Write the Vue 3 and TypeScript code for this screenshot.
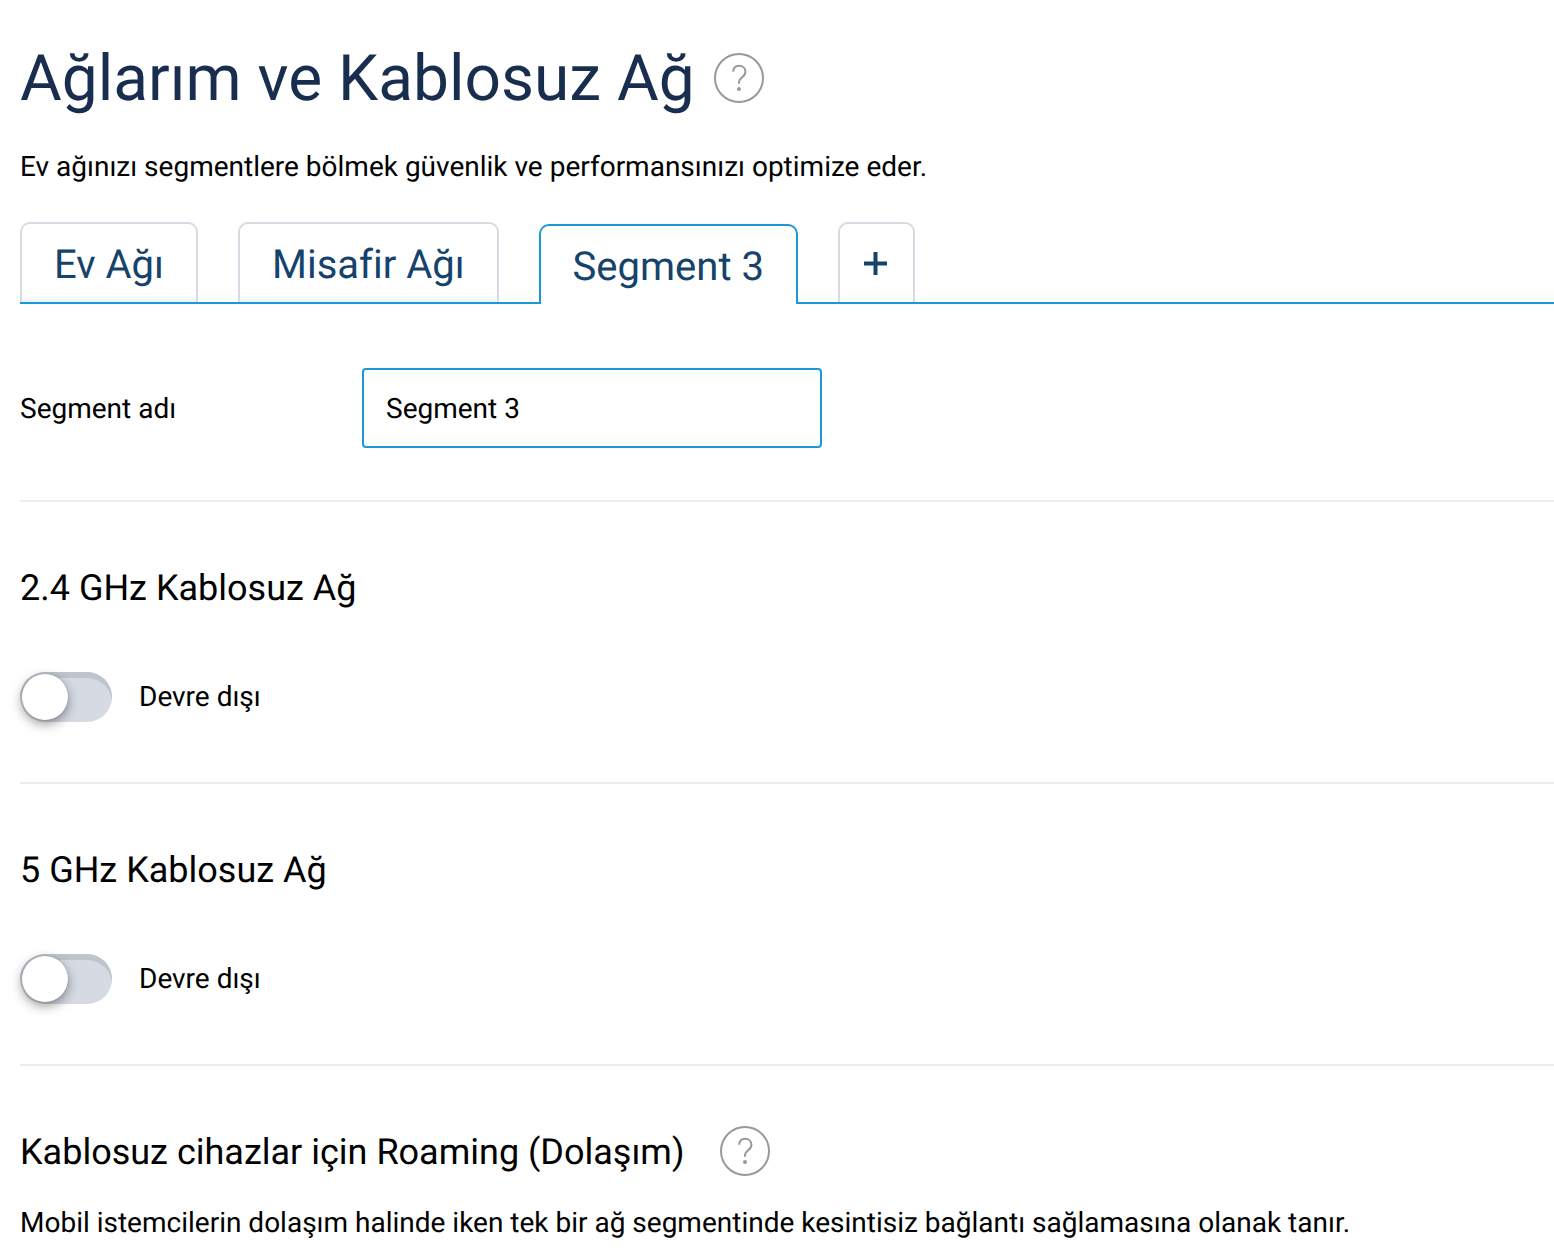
<script setup lang="ts">
import { ref } from 'vue'

const tabs = ['Ev Ağı', 'Misafir Ağı', 'Segment 3']
const active = ref('Segment 3')
const segmentName = ref('Segment 3')
const bands = ref([
  { id: 'band24', title: '2.4 GHz Kablosuz Ağ', enabled: false },
  { id: 'band5', title: '5 GHz Kablosuz Ağ', enabled: false },
])
</script>

<template>
  <main class="page">
    <header class="heading">
      <h1>Ağlarım ve Kablosuz Ağ</h1>
      <button class="help" type="button" aria-label="Yardım">
        <svg viewBox="0 0 50 50"><circle cx="25" cy="25" r="24" /><path d="M19.200 18.800c.2-3.800 2.500-6 6-6 3.600 0 6.200 2.300 6.200 5.900 0 5.900-6.400 5.300-6.400 10.300v1.800" /><circle class="dot" cx="25" cy="36" r="2" /></svg>
      </button>
    </header>
    <p class="lead">Ev ağınızı segmentlere bölmek güvenlik ve performansınızı optimize eder.</p>

    <nav class="tabs">
      <button v-for="tab in tabs" :key="tab" type="button" class="tab" :class="{ active: tab === active }" @click="active = tab">{{ tab }}</button>
      <button type="button" class="tab add" aria-label="Segment ekle">
        <svg viewBox="0 0 25 24"><path d="M11.500 0v23M0 11.500h23" /></svg>
      </button>
    </nav>

    <section class="field">
      <label for="segment-name">Segment adı</label>
      <input id="segment-name" v-model="segmentName" type="text" />
    </section>

    <section v-for="band in bands" :key="band.id" class="band">
      <h2>{{ band.title }}</h2>
      <label class="switch" :for="band.id">
        <input :id="band.id" v-model="band.enabled" type="checkbox" />
        <span>{{ band.enabled ? 'Etkin' : 'Devre dışı' }}</span>
      </label>
    </section>

    <section class="roaming">
      <div class="roaming-title">
        <h2>Kablosuz cihazlar için Roaming (Dolaşım)</h2>
        <button class="help" type="button" aria-label="Yardım">
          <svg viewBox="0 0 50 50"><circle cx="25" cy="25" r="24" /><path d="M19.200 18.800c.2-3.800 2.500-6 6-6 3.600 0 6.200 2.300 6.200 5.900 0 5.900-6.400 5.300-6.400 10.300v1.800" /><circle class="dot" cx="25" cy="36" r="2" /></svg>
        </button>
      </div>
      <p>Mobil istemcilerin dolaşım halinde iken tek bir ağ segmentinde kesintisiz bağlantı sağlamasına olanak tanır.</p>
    </section>
  </main>
</template>

<style>
body {
  margin: 0;
  background: #fff;
}
</style>

<style scoped>
.page {
  padding: 39px 0 0 20px;
  font-family: Roboto, sans-serif;
  font-size: 28px;
  font-variant-ligatures: none;
  text-rendering: geometricPrecision;
  line-height: 34px;
  color: #000;
}
h1,
h2,
p {
  margin: 0;
  font-weight: 400;
}
button {
  font-family: inherit;
  font-variant-ligatures: inherit;
  text-rendering: inherit;
  cursor: pointer;
}
.heading {
  display: flex;
  align-items: center;
  gap: 19px;
}
h1 {
  padding-top: 2px;
  font-size: 64px;
  line-height: 76px;
  color: #192d4e;
}
h2 {
  font-size: 36px;
  line-height: 44px;
}
.help {
  flex: none;
  width: 50px;
  height: 50px;
  padding: 0;
  border: 0;
  background: none;
}
.help svg {
  display: block;
  fill: none;
  stroke: #999;
  stroke-width: 2;
}
.help .dot {
  fill: #999;
  stroke: none;
}
.lead {
  margin-top: 33px;
}
.tabs {
  display: flex;
  align-items: flex-end;
  gap: 40px;
  margin-top: 38px;
  border-bottom: 2px solid #1c98d4;
}
.tab {
  box-sizing: border-box;
  height: 80px;
  padding: 4px 32px 0;
  border: 2px solid #d6dae3;
  border-bottom: 0;
  border-radius: 10px 10px 0 0;
  background: linear-gradient(#fff 92%, #e8f4fb);
  font-size: 40px;
  line-height: 46px;
  color: #15436b;
}
.tab.active {
  margin-bottom: -2px;
  border-color: #1c98d4;
  background: #fff;
}
.tab.add {
  padding: 2px 24px 0;
  background: #fff;
}
.add svg {
  display: block;
  width: 25px;
  height: 24px;
  fill: none;
  stroke: #15436b;
  stroke-width: 4;
}
.field {
  display: flex;
  align-items: center;
  padding: 64px 0 52px;
}
.field label {
  width: 342px;
  padding-top: 2px;
}
.field input {
  box-sizing: border-box;
  width: 460px;
  height: 80px;
  padding: 0 22px;
  border: 2px solid #1c98d4;
  border-radius: 4px;
  outline: 0;
  background: #fff;
  font: inherit;
  text-rendering: inherit;
  color: inherit;
}
.band,
.roaming {
  border-top: 2px solid #ededed;
}
.band {
  padding: 64px 0 60px;
}
.switch {
  display: flex;
  align-items: center;
  gap: 27px;
  width: max-content;
  margin-top: 62px;
}
.switch input {
  appearance: none;
  width: 92px;
  height: 50px;
  margin: 0;
  border-radius: 25px;
  background: #d6dae3;
  box-shadow: inset 0 6px 0 #bfc4cd;
}
.switch input::before {
  content: '';
  display: block;
  width: 46px;
  height: 46px;
  margin: 2px;
  border-radius: 50%;
  background: #fff;
  box-shadow: 0 4px 12px rgba(0, 0, 0, 0.4), 0 0 2px rgba(0, 0, 0, 0.2);
}
.switch input:checked::before {
  margin-left: 44px;
}
.roaming {
  padding: 60px 0 10px;
}
.roaming-title {
  display: flex;
  align-items: center;
  gap: 36px;
}
.roaming-title h2 {
  padding-top: 2px;
}
.roaming p {
  margin-top: 30px;
}
</style>
